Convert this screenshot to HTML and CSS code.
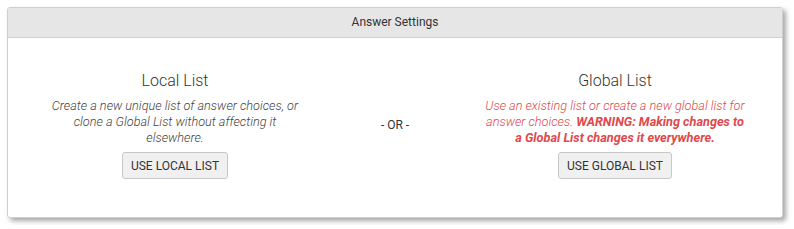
FILE: index.html
```html
<!DOCTYPE html>
<html>

<head>
    <title>Answer Settings</title>
    <meta charset="UTF-8">
    <link rel="stylesheet" href="styles.css">
</head>

<body>
    <section class="panel">
        <div class="panel-heading">Answer Settings</div>
        <div class="panel-body">
            <div class="list-option">
                <h3>Local List</h3>
                <p class="note">Create a new unique list of answer choices, or clone a Global List without affecting it elsewhere.</p>
                <button class="btn">Use Local List</button>
            </div>
            <div class="divider">- OR -</div>
            <div class="list-option">
                <h3>Global List</h3>
                <p class="note warning">Use an existing list or create a new global list for answer choices. <b>WARNING: Making changes to a Global List changes it everywhere.</b></p>
                <button class="btn">Use Global List</button>
            </div>
        </div>
    </section>
</body>

</html>
```

FILE: styles.css
```css
body {
    font-family: Roboto, "Liberation Sans", sans-serif;
    margin: 0;
    padding: 7px;
    background-color: #fff;
    color: #333;
}

.panel {
    width: 774px;
    height: 209px;
    border: 1px solid #d0d0d0;
    border-radius: 3px;
    box-shadow: 3px 3px 5px rgba(0, 0, 0, 0.35);
    background-color: #fff;
    display: flex;
    flex-direction: column;
}

.panel-heading {
    height: 29px;
    line-height: 29px;
    background-color: #e6e6e6;
    border-bottom: 1px solid #d0d0d0;
    text-align: center;
    font-size: 12px;
    color: #333;
}

.panel-body {
    flex: 1;
    display: grid;
    grid-template-columns: 290px 150px 290px;
    justify-content: center;
    align-items: center;
    padding-bottom: 5px;
}

.list-option {
    text-align: center;
    padding: 0 15px;
}

.list-option h3 {
    margin: 0 0 7px;
    font-size: 16px;
    font-weight: 300;
    line-height: 20px;
}

.note {
    margin: 0 0 6px;
    font-size: 12.7px;
    font-style: italic;
    font-weight: 300;
    line-height: 16px;
    color: #444;
}

.warning {
    color: #e0484c;
}

.warning b {
    font-weight: bold;
}

.divider {
    text-align: center;
    font-size: 12px;
}

.btn {
    font-family: inherit;
    font-size: 12px;
    text-transform: uppercase;
    color: #333;
    background-color: #f0f0f0;
    border: 1px solid #c8c8c8;
    border-radius: 3px;
    padding: 0 8px;
    height: 27px;
    cursor: pointer;
}
```
